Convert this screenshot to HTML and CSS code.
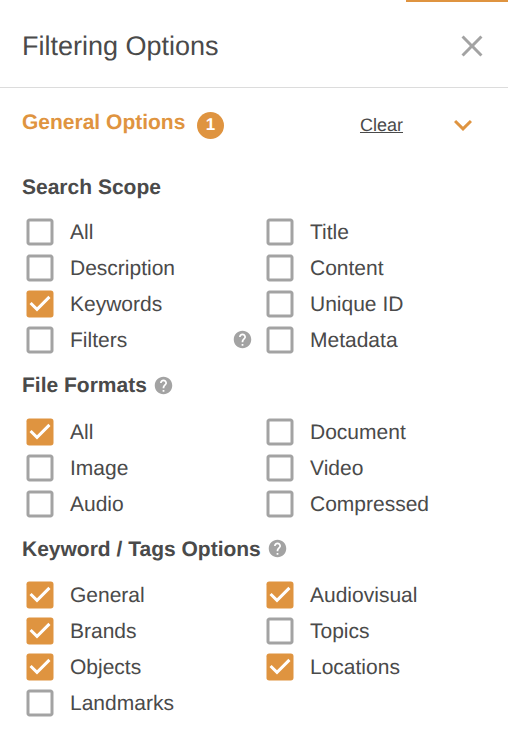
FILE: index.html
```html
<!DOCTYPE html>
<html lang="en">
<head>
<meta charset="utf-8">
<title>Filtering Options</title>
<link rel="stylesheet" href="styles.css">
</head>
<body>
<svg class="defs" aria-hidden="true">
  <symbol id="on" viewBox="0 0 24 24"><rect x="3" y="3" width="18" height="18" rx="1.8"/><path class="tick" d="M10 17l-5-5 1.410-1.410L10 14.170l7.590-7.590L19 8z"/></symbol>
  <symbol id="off" viewBox="0 0 24 24"><path d="M19 5v14H5V5h14m0-2H5c-1.100 0-2 .9-2 2v14c0 1.100.9 2 2 2h14c1.100 0 2-.9 2-2V5c0-1.100-.9-2-2-2z"/></symbol>
  <symbol id="help" viewBox="0 0 24 24"><path d="M12 2C6.480 2 2 6.480 2 12s4.480 10 10 10 10-4.480 10-10S17.520 2 12 2zm1 17h-2v-2h2v2zm2.070-7.750l-.9.920C13.450 12.900 13 13.500 13 15h-2v-.5c0-1.100.45-2.100 1.170-2.830l1.240-1.260c.37-.36.59-.86.59-1.410 0-1.100-.9-2-2-2s-2 .9-2 2H8c0-2.210 1.790-4 4-4s4 1.790 4 4c0 .88-.36 1.680-.93 2.250z"/></symbol>
</svg>
<main class="panel">
  <div class="tab"></div>
  <header class="header">
    <h1>Filtering Options</h1>
    <svg class="icon close" viewBox="0 0 24 24"><path d="M19 6.410L17.590 5 12 10.590 6.410 5 5 6.410 10.590 12 5 17.590 6.410 19 12 13.410 17.590 19 19 17.590 13.410 12z"/></svg>
  </header>
  <div class="group">
    <h2>General Options</h2>
    <span class="badge">1</span>
    <a class="clear">Clear</a>
    <svg class="icon chevron" viewBox="0 0 24 24"><path d="M16.590 8.590L12 13.170 7.410 8.590 6 10l6 6 6-6z"/></svg>
  </div>
  <section class="scope">
    <h3>Search Scope</h3>
    <div class="options">
      <label><svg class="icon"><use href="#off"/></svg><span>All</span></label>
      <label><svg class="icon"><use href="#off"/></svg><span>Title</span></label>
      <label><svg class="icon"><use href="#off"/></svg><span>Description</span></label>
      <label><svg class="icon"><use href="#off"/></svg><span>Content</span></label>
      <label class="checked"><svg class="icon"><use href="#on"/></svg><span>Keywords</span></label>
      <label><svg class="icon"><use href="#off"/></svg><span>Unique ID</span></label>
      <label><svg class="icon"><use href="#off"/></svg><span>Filters</span><svg class="help"><use href="#help"/></svg></label>
      <label><svg class="icon"><use href="#off"/></svg><span>Metadata</span></label>
    </div>
  </section>
  <section class="formats">
    <h3>File Formats<svg class="help"><use href="#help"/></svg></h3>
    <div class="options">
      <label class="checked"><svg class="icon"><use href="#on"/></svg><span>All</span></label>
      <label><svg class="icon"><use href="#off"/></svg><span>Document</span></label>
      <label><svg class="icon"><use href="#off"/></svg><span>Image</span></label>
      <label><svg class="icon"><use href="#off"/></svg><span>Video</span></label>
      <label><svg class="icon"><use href="#off"/></svg><span>Audio</span></label>
      <label><svg class="icon"><use href="#off"/></svg><span>Compressed</span></label>
    </div>
  </section>
  <section class="tags">
    <h3>Keyword / Tags Options<svg class="help"><use href="#help"/></svg></h3>
    <div class="options">
      <label class="checked"><svg class="icon"><use href="#on"/></svg><span>General</span></label>
      <label class="checked"><svg class="icon"><use href="#on"/></svg><span>Audiovisual</span></label>
      <label class="checked"><svg class="icon"><use href="#on"/></svg><span>Brands</span></label>
      <label><svg class="icon"><use href="#off"/></svg><span>Topics</span></label>
      <label class="checked"><svg class="icon"><use href="#on"/></svg><span>Objects</span></label>
      <label class="checked"><svg class="icon"><use href="#on"/></svg><span>Locations</span></label>
      <label><svg class="icon"><use href="#off"/></svg><span>Landmarks</span></label>
    </div>
  </section>
</main>
</body>
</html>
```
FILE: styles.css
```css
* { box-sizing: border-box; }
body { margin: 0; background: #fff; color: #4a4a4a; font-family: "Liberation Sans", Arial, sans-serif; text-rendering: geometricPrecision; }
h1, h2, h3 { margin: 0; }
.defs { display: none; }
.tick { fill: #fff; }
.panel { width: 508px; height: 736px; overflow: hidden; }
.tab { height: 2px; margin-left: 406px; background: #df9440; }
.icon { display: block; flex: none; width: 36px; height: 36px; fill: #a3a3a3; }
.help { display: block; flex: none; width: 21px; height: 21px; fill: #a3a3a3; }
.header { display: flex; align-items: center; justify-content: space-between; height: 86px; padding: 2px 18px 0 22px; border-bottom: 1px solid #dcdcdc; }
h1 { font-size: 27px; font-weight: 400; letter-spacing: 0; line-height: 36px; }
.group { display: flex; align-items: center; height: 74px; padding: 0 27px 0 22px; color: #df9440; }
h2 { width: 163px; font-size: 21px; line-height: 24px; white-space: nowrap; margin-top: -4px; }
.badge { width: 27px; height: 27px; margin-left: 12px; border-radius: 50%; background: #df9440; color: #fff; font-size: 17px; font-weight: 700; line-height: 25px; text-align: center; }
.clear { margin-left: auto; color: #4a4a4a; font-size: 18px; text-decoration: underline; }
.chevron { margin-left: 42px; fill: #df9440; }
section { padding-left: 22px; }
h3 { display: flex; align-items: center; height: 52px; font-size: 21px; }
h3 .help { margin-left: 6px; }
.scope h3 { padding-bottom: 1px; }
.formats h3 { height: 56px; }
.formats h3 .help { margin-bottom: 2px; }
.tags h3 { height: 55px; padding-top: 1px; }
.tags h3 .help { margin-bottom: 3px; }
.options { display: grid; grid-template-columns: 240px 240px; grid-auto-rows: 36px; }
label { display: flex; align-items: center; font-size: 21px; }
label span { margin-left: 12px; padding-top: 2px; }
label .help { margin: 0 9px 2px auto; }
.checked .icon { fill: #df9440; }
```
